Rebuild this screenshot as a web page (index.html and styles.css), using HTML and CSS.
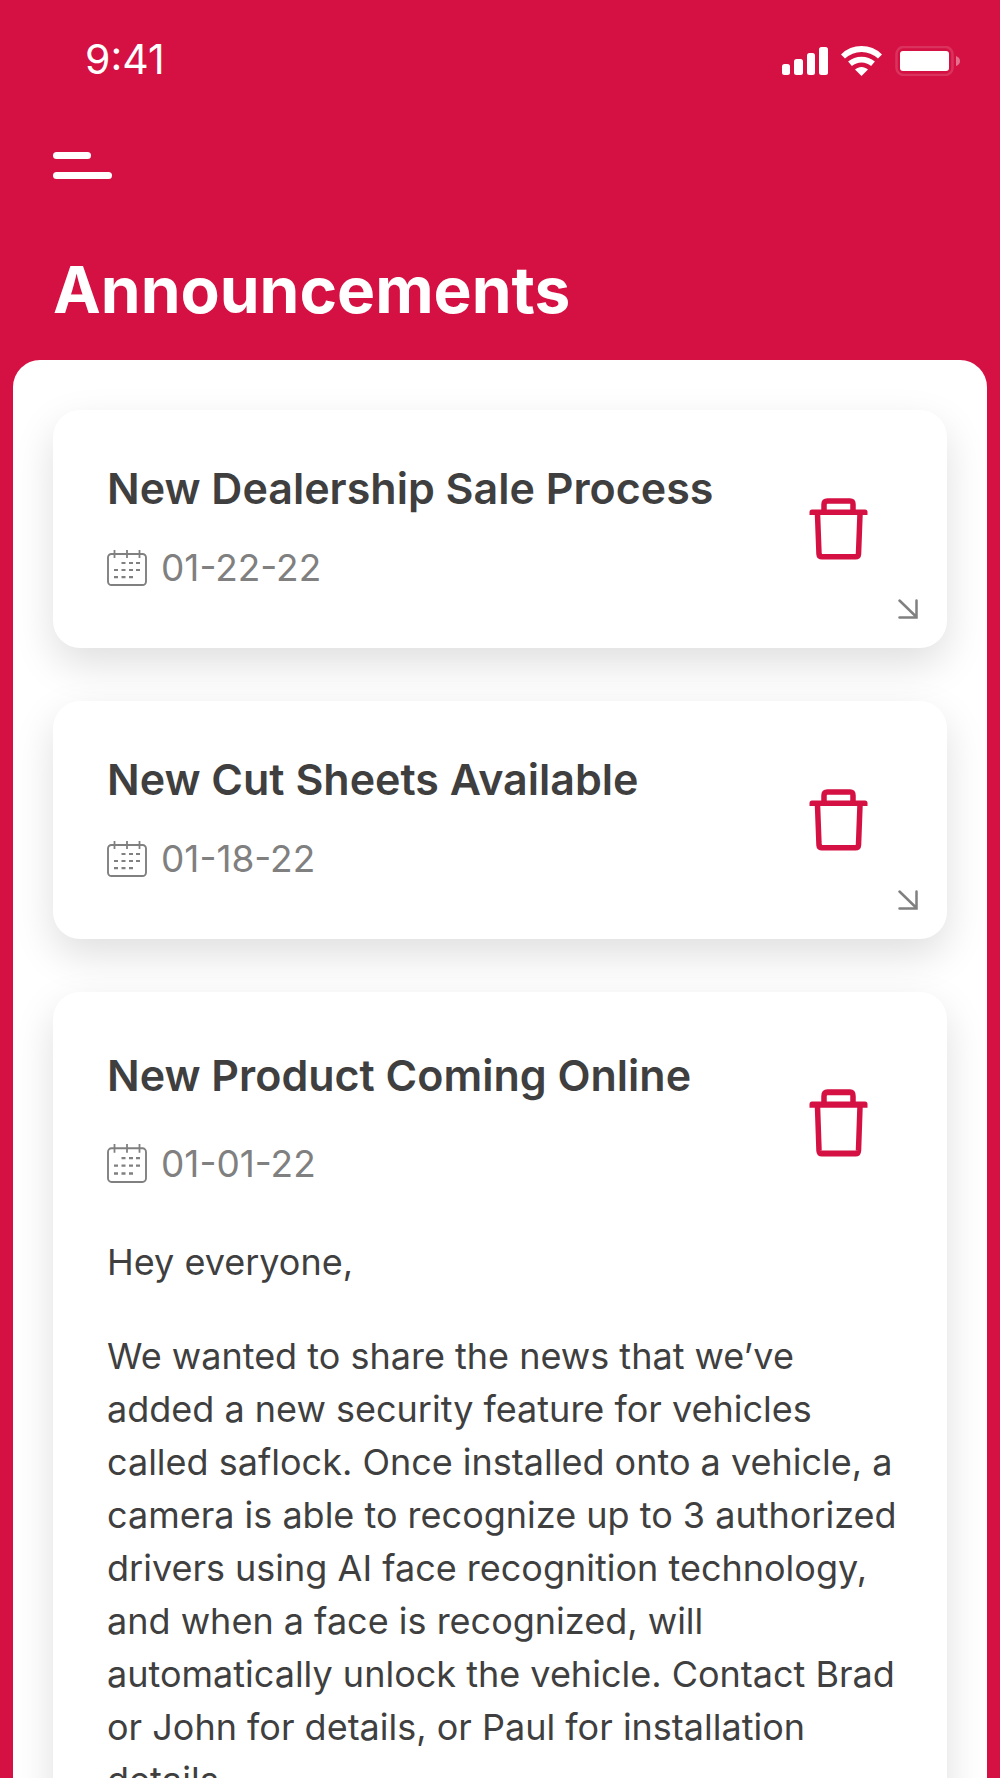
FILE: index.html
```html
<!DOCTYPE html>
<html lang="en">
<head>
    <meta charset="UTF-8">
    <meta name="viewport" content="width=device-width, initial-scale=1.0">
    <title>Announcements</title>
    <link rel="stylesheet" href="styles.css">
</head>
<body>
    <!-- Shared icons -->
    <svg class="icon-defs" aria-hidden="true">
        <symbol id="icon-trash" viewBox="0 0 59 62" preserveAspectRatio="none">
            <path d="M15 13V6.5Q15 3 18.500 3h22.500Q44 3 44 6.500V13" fill="none" stroke="currentColor" stroke-width="5.500"/>
            <path d="M3 11.500h53q2.500 0 2.500 2.500v3H.5v-3q0-2.500 2.500-2.500z" fill="currentColor"/>
            <path d="M8.500 16l1.500 40q.2 2.800 3 2.800h33.500q2.800 0 3-2.800L51 16" fill="none" stroke="currentColor" stroke-width="5.500"/>
        </symbol>
        <symbol id="icon-calendar" viewBox="0 0 40 36" preserveAspectRatio="none">
            <rect x="1" y="4" width="38" height="31" rx="3.500" fill="none" stroke="currentColor" stroke-width="1.900"/>
            <path d="M7.500 0v8M20 0v8M32.500 0v8" stroke="currentColor" stroke-width="1.800"/>
            <path d="M14.500 13h4M22 13h4M29 13h4M7 20h4M14.500 20h4M22 20h4M29 20h4M7 27.200h4M14.500 27.200h4M22 27.200h4" stroke="currentColor" stroke-width="2.200"/>
        </symbol>
        <symbol id="icon-expand" viewBox="0 0 20 20">
            <path d="M1.500 1.500l17 16.500M18.500 1.500V18.500H1.500" fill="none" stroke="currentColor" stroke-width="2.500" stroke-linecap="round"/>
        </symbol>
    </svg>

    <div class="screen">
        <header class="header">
            <div class="status-bar">
                <span class="time">9:41</span>
                <div class="status-icons">
                    <svg width="46" height="30" viewBox="0 0 46 30" fill="#fff" role="img" aria-label="Signal">
                        <rect x="0" y="18" width="8" height="11" rx="2.500"/>
                        <rect x="12" y="13" width="9" height="16" rx="2.500"/>
                        <rect x="25" y="7" width="8" height="22" rx="2.500"/>
                        <rect x="37" y="1" width="9" height="28" rx="2.500"/>
                    </svg>
                    <svg width="41" height="30" viewBox="0 0 41 30" role="img" aria-label="Wi-Fi">
                        <g fill="none" stroke="#fff" stroke-width="5.800">
                            <path d="M2 10.500C12.500.5 28.500.5 39 10.500"/>
                            <path d="M9 17.800c6.600-5.700 16.400-5.700 23 0"/>
                        </g>
                        <path d="M14 23.500c3.800-3.400 9.200-3.400 13 0L20.500 30z" fill="#fff"/>
                    </svg>
                    <svg width="65" height="30" viewBox="0 0 65 30" role="img" aria-label="Battery">
                        <rect x="1.500" y="1" width="56" height="28" rx="7" fill="none" stroke="#fff" stroke-opacity=".14" stroke-width="2.500"/>
                        <rect x="5" y="5" width="49" height="20" rx="3" fill="#fff"/>
                        <path d="M61 10q4 1.500 4 5t-4 5z" fill="#fff" fill-opacity=".4"/>
                    </svg>
                </div>
            </div>
            <button type="button" class="menu-button" aria-label="Menu">
                <span class="menu-bar menu-bar-short"></span>
                <span class="menu-bar"></span>
            </button>
            <h1>Announcements</h1>
        </header>

        <main class="announcement-list">
            <article class="announcement">
                <div class="announcement-head">
                    <div class="announcement-info">
                        <h2>New Dealership Sale Process</h2>
                        <p class="date"><svg class="calendar-icon" aria-hidden="true"><use href="#icon-calendar"/></svg>01-22-22</p>
                    </div>
                    <button type="button" class="delete-button" aria-label="Delete"><svg><use href="#icon-trash"/></svg></button>
                </div>
                <button type="button" class="expand-button" aria-label="Expand"><svg><use href="#icon-expand"/></svg></button>
            </article>

            <article class="announcement">
                <div class="announcement-head">
                    <div class="announcement-info">
                        <h2>New Cut Sheets Available</h2>
                        <p class="date"><svg class="calendar-icon" aria-hidden="true"><use href="#icon-calendar"/></svg>01-18-22</p>
                    </div>
                    <button type="button" class="delete-button" aria-label="Delete"><svg><use href="#icon-trash"/></svg></button>
                </div>
                <button type="button" class="expand-button" aria-label="Expand"><svg><use href="#icon-expand"/></svg></button>
            </article>

            <article class="announcement announcement-open">
                <div class="announcement-head">
                    <div class="announcement-info">
                        <h2>New Product Coming Online</h2>
                        <p class="date"><svg class="calendar-icon" aria-hidden="true"><use href="#icon-calendar"/></svg>01-01-22</p>
                    </div>
                    <button type="button" class="delete-button" aria-label="Delete"><svg><use href="#icon-trash"/></svg></button>
                </div>
                <div class="announcement-body">
                    <p>Hey everyone,</p>
                    <p>We wanted to share the news that we’ve added a new security feature for vehicles called saflock. Once installed onto a vehicle, a camera is able to recognize up to 3 authorized drivers using AI face recognition technology, and when a face is recognized, will automatically unlock the vehicle. Contact Brad or John for details, or Paul for installation details.</p>
                </div>
            </article>
        </main>
    </div>
</body>
</html>
```
FILE: styles.css
```css
* {
    box-sizing: border-box;
}

body {
    font-family: Inter, "Liberation Sans", sans-serif;
    background-color: #d41142;
    color: #3f3f3f;
    margin: 0;
}

h1,
h2,
p {
    margin: 0;
}

button {
    background: none;
    border: none;
    padding: 0;
    cursor: pointer;
}

svg {
    display: block;
}

.icon-defs {
    position: absolute;
    width: 0;
    height: 0;
}

.screen {
    display: flex;
    flex-direction: column;
    height: 100vh;
    padding: 0 13px;
}

/* Header */
.header {
    color: #fff;
    padding: 0 27px 34px 40px;
}

.status-bar {
    display: flex;
    justify-content: space-between;
    align-items: center;
    height: 117px;
    padding-left: 32px;
}

.time {
    font-size: 41px;
    font-weight: 400;
}

.status-icons {
    display: flex;
    gap: 13px;
    margin-top: 4px;
}

.menu-button {
    display: flex;
    flex-direction: column;
    gap: 13px;
    margin: 35px 0 74px;
}

.menu-bar {
    width: 59px;
    height: 7px;
    border-radius: 4px;
    background-color: #fff;
}

.menu-bar-short {
    width: 38px;
}

h1 {
    font-size: 64px;
    font-weight: 700;
    line-height: 73px;
}

/* Announcements */
.announcement-list {
    flex: 1;
    min-height: 0;
    overflow: hidden;
    display: flex;
    flex-direction: column;
    gap: 53px;
    padding: 50px 40px 0;
    background-color: #fff;
    border-radius: 27px 27px 0 0;
}

.announcement {
    position: relative;
    flex-shrink: 0;
    padding: 52px 48px 54px 54px;
    background-color: #fff;
    border-radius: 27px;
    box-shadow: 0 16px 40px rgba(0, 0, 0, 0.13);
}

.announcement-head {
    display: flex;
    justify-content: space-between;
    align-items: flex-start;
    padding-right: 31px;
}

.announcement-info {
    display: flex;
    flex-direction: column;
    gap: 27px;
}

h2 {
    font-size: 43px;
    font-weight: 600;
    line-height: 52px;
}

.date {
    display: flex;
    align-items: center;
    gap: 14px;
    color: #808080;
    font-size: 37px;
    line-height: 53px;
}

.calendar-icon {
    width: 40px;
    height: 36px;
}

.delete-button {
    margin-top: 36px;
    color: #d41142;
}

.delete-button svg {
    width: 59px;
    height: 62px;
}

.expand-button {
    position: absolute;
    right: 29px;
    bottom: 29px;
    color: #808080;
}

.expand-button svg {
    width: 20px;
    height: 20px;
}

.announcement-open {
    padding-top: 57px;
}

.announcement-open .announcement-info {
    gap: 36px;
}

.announcement-open .calendar-icon {
    height: 39px;
}

.announcement-open .delete-button {
    margin-top: 40px;
}

.announcement-open .delete-button svg {
    height: 68px;
}

.announcement-body {
    display: flex;
    flex-direction: column;
    gap: 41px;
    margin-top: 46px;
    font-size: 36px;
    line-height: 53px;
}
```
